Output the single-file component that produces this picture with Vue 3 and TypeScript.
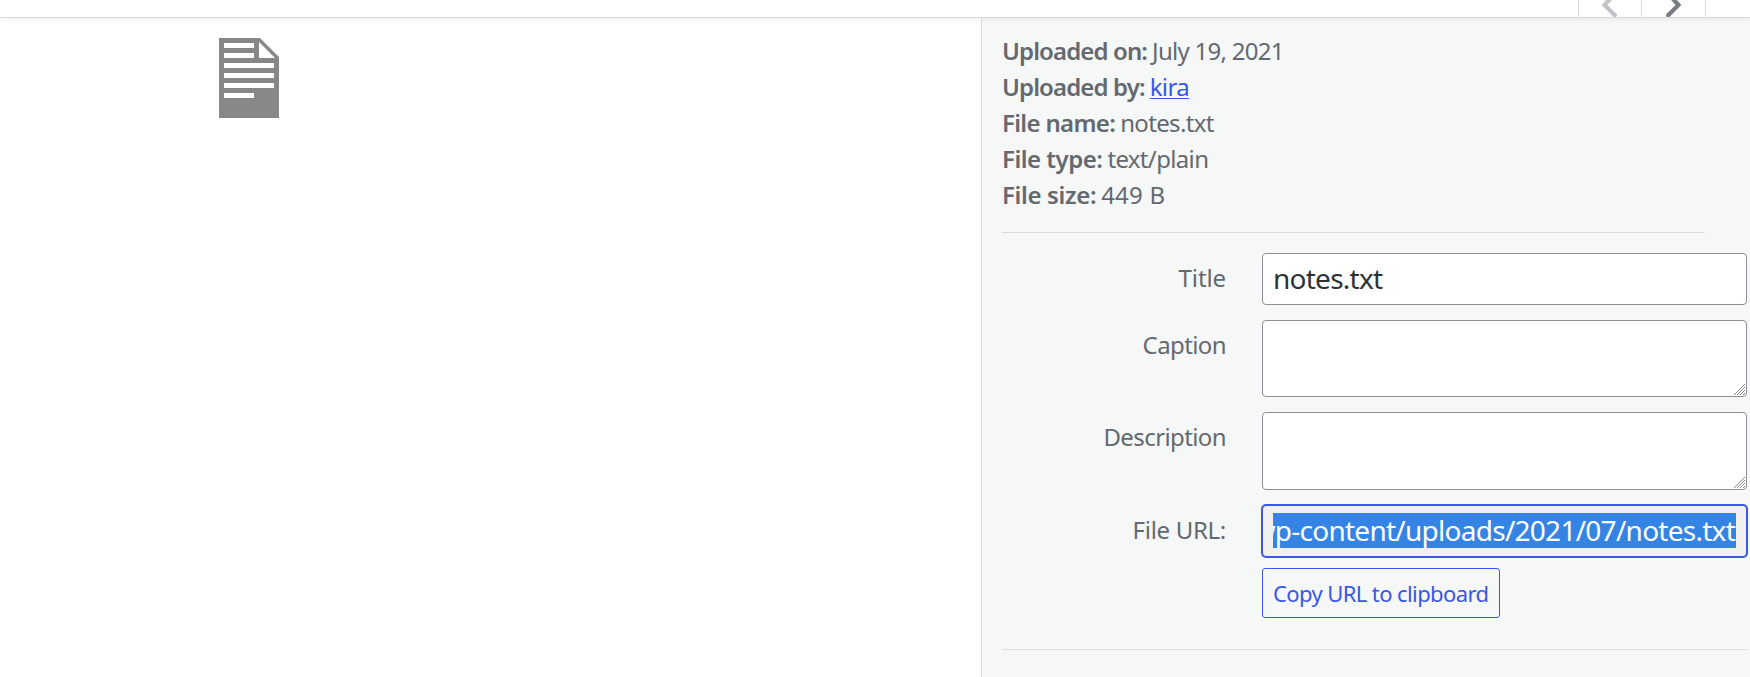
<script setup lang="ts">
interface Detail {
  key: string
  label: string
  value: string
  link?: boolean
}

const details: Detail[] = [
  { key: 'date', label: 'Uploaded on:', value: 'July 19, 2021' },
  { key: 'author', label: 'Uploaded by:', value: 'kira', link: true },
  { key: 'name', label: 'File name:', value: 'notes.txt' },
  { key: 'type', label: 'File type:', value: 'text/plain' },
  { key: 'size', label: 'File size:', value: '449 B' },
]

const areas: string[] = ['Caption', 'Description']
</script>

<template>
  <div class="modal">
    <header class="bar">
      <div class="nav">
        <svg width="62" height="17" viewBox="0 0 62 17"><path d="M35.5 -6 L25.5 5 L35.8 15.2" fill="none" stroke="#c3c4c7" stroke-width="4.2" stroke-linecap="round" /></svg>
      </div>
      <div class="nav next">
        <svg width="63" height="17" viewBox="0 0 63 17"><path d="M26.5 -6 L36.5 5 L26.2 15.2" fill="none" stroke="#787c82" stroke-width="4.2" stroke-linecap="round" /></svg>
      </div>
    </header>
    <main class="content">
      <section class="preview">
        <svg class="file" width="60" height="80" viewBox="0 0 60 80">
          <path d="M0 0H41L60 19V80H0Z" fill="#888" />
          <path d="M40 4V20H56ZM5 5H35V10H5ZM5 15H35V20H5ZM5 25H55V30H5ZM5 35H55V40H5ZM5 45H55V50H5ZM5 55H35V60H5Z" fill="#fff" />
        </svg>
      </section>
      <aside class="info">
        <div class="details">
          <div v-for="d in details" :key="d.key" class="detail" :class="d.key">
            <strong>{{ d.label }}</strong>
            <a v-if="d.link" class="value">{{ d.value }}</a>
            <span v-else class="value">{{ d.value }}</span>
          </div>
        </div>
        <div class="row title">
          <label><span>Title</span></label>
          <div class="box input"><span>notes.txt</span></div>
        </div>
        <div v-for="a in areas" :key="a" class="row area" :class="a.toLowerCase()">
          <label><span>{{ a }}</span></label>
          <div class="box textarea">
            <svg width="11" height="11" viewBox="0 0 11 11"><path d="M0 11L11 0M3 11L11 3M6 11L11 6M9 11L11 9" stroke="#888" stroke-width="1" /></svg>
          </div>
        </div>
        <div class="row url">
          <label><span>File URL:</span></label>
          <div class="box focused"><div class="selection"><span>wp-content/uploads/2021/07/notes.txt</span></div></div>
        </div>
        <button class="copy" type="button"><span>Copy URL to clipboard</span></button>
        <div class="rule"></div>
      </aside>
    </main>
  </div>
</template>

<style>
body { margin: 0; overflow: hidden; }
</style>

<style scoped>
.modal {
  width: 1750px;
  height: 677px;
  display: flex;
  flex-direction: column;
  overflow: hidden;
  background: #fff;
  color: #646970;
  font-family: "Noto Sans", sans-serif;
  font-size: 24px;
  line-height: 36px;
  white-space: nowrap;
}
.modal * { box-sizing: border-box; }
.bar {
  position: relative;
  height: 18px;
  flex: none;
  display: flex;
  justify-content: flex-end;
  padding-right: 44px;
  border-bottom: 1px solid #d8dbdc;
  background: #fff;
  box-shadow: 0 2px 4px rgba(0, 0, 0, 0.06);
}
.nav { width: 63px; border-left: 1px solid #dcdcde; overflow: hidden; }
.nav.next { width: 65px; border-right: 1px solid #dcdcde; }
svg { display: block; }
.content { flex: 1; display: flex; min-height: 0; }
.preview { width: 981px; padding: 20px 0 0 219px; }
.info {
  width: 769px;
  border-left: 1px solid #d8dadb;
  background: #f6f7f7;
  padding: 10px 0 0 20px;
}
.details { width: 703px; height: 205px; padding-top: 5px; border-bottom: 1px solid #dcdcde; }
.detail { height: 36px; display: flex; gap: 5px; letter-spacing: -0.65px; }
.detail strong { font-weight: 600; letter-spacing: -0.88px; }
.date .value { letter-spacing: -0.73px; }
.name strong { letter-spacing: -0.67px; }
.type strong { letter-spacing: -0.5px; }
.size strong { letter-spacing: -0.35px; }
.size .value { letter-spacing: 0.2px; }
a { color: #3858e9; text-decoration: underline; text-decoration-thickness: 1px; text-underline-offset: 2px; }
.row { display: flex; margin-bottom: 15px; }
.row.title { margin-top: 20px; }
label { width: 224px; margin-right: 36px; padding-top: 7px; text-align: right; letter-spacing: -0.6px; }
.title label { letter-spacing: -0.1px; }
.url label { letter-spacing: -0.3px; }
.box { width: 485px; border: 1px solid #8c8f94; border-radius: 4px; background: #fff; }
.input { height: 52px; padding: 6px 10px; font-size: 28px; letter-spacing: -0.75px; color: #2c3338; }
.textarea { height: 77px; display: flex; align-items: flex-end; justify-content: flex-end; padding: 0 1px 1px 0; }
.row.description .textarea { height: 78px; }
.row.url { margin-bottom: 11px; }
.focused {
  height: 52px;
  padding: 7px 10px;
  border-color: #3858e9;
  box-shadow: 0 0 0 1px #3858e9;
  background: #f0f0f0;
  font-size: 28px;
}
.selection {
  height: 35px;
  display: flex;
  justify-content: flex-end;
  padding-right: 1px;
  overflow: hidden;
  background: #3584e4;
  color: #fff;
  line-height: 34px;
  letter-spacing: -0.74px;
}
.copy {
  display: block;
  width: 238px;
  height: 50px;
  margin: 0 0 31px 260px;
  padding: 0 0 0 10px;
  border: 1px solid #3858e9;
  border-radius: 3px;
  background: #f6f7f7;
  color: #3858e9;
  font: 22px/46px "Noto Sans", sans-serif;
  letter-spacing: -0.6px;
  text-align: left;
}
.rule { width: 746px; height: 1px; background: #dcdcde; }
</style>
